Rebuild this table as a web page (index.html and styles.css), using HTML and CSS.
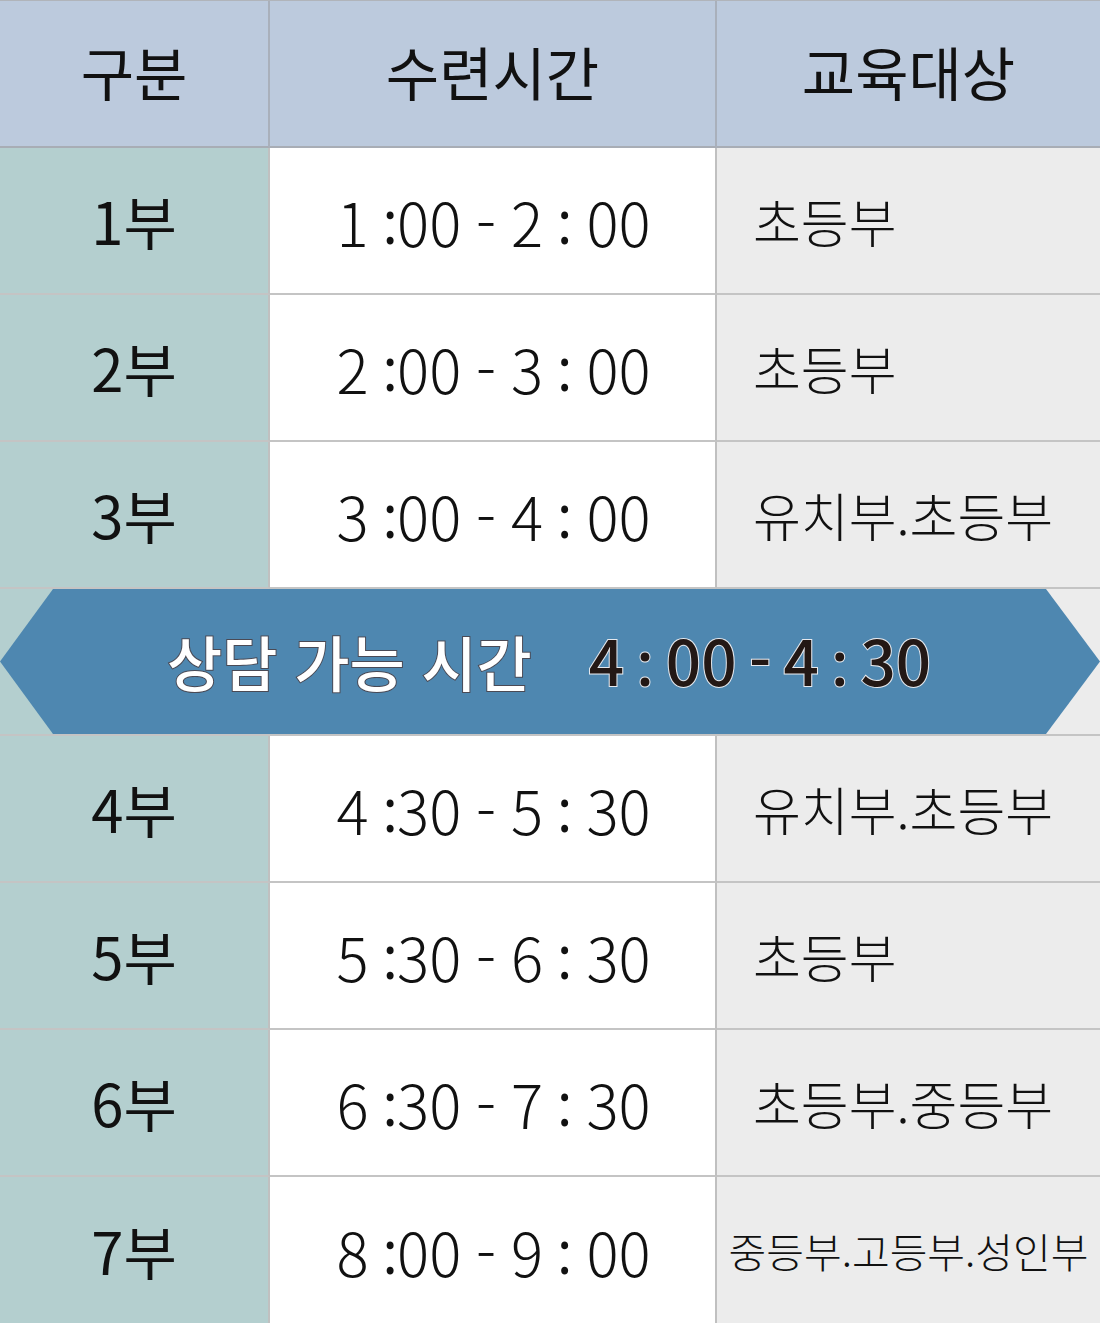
FILE: index.html
```html
<!DOCTYPE html>
<html lang="ko">
<head>
<meta charset="utf-8">
<title>수련시간표</title>
<link rel="stylesheet" href="styles.css">
</head>
<body>
<div class="table">
  <div class="cell head c1">구분</div>
  <div class="cell head c2">수련시간</div>
  <div class="cell head c3">교육대상</div>

  <div class="cell part">1부</div>
  <div class="cell time">1 <span class="colon">:</span>00 - 2 <span class="colon">:</span> 00</div>
  <div class="cell target">초등부</div>

  <div class="cell part">2부</div>
  <div class="cell time">2 <span class="colon">:</span>00 - 3 <span class="colon">:</span> 00</div>
  <div class="cell target">초등부</div>

  <div class="cell part">3부</div>
  <div class="cell time">3 <span class="colon">:</span>00 - 4 <span class="colon">:</span> 00</div>
  <div class="cell target">유치부.초등부</div>

  <div class="banner-row">
    <div class="banner">
      <span class="banner-label">상담 가능 시간</span>
      <span class="banner-time">4 <span class="colon">:</span> 00 - 4 <span class="colon">:</span> 30</span>
    </div>
  </div>

  <div class="cell part">4부</div>
  <div class="cell time">4 <span class="colon">:</span>30 - 5 <span class="colon">:</span> 30</div>
  <div class="cell target">유치부.초등부</div>

  <div class="cell part">5부</div>
  <div class="cell time">5 <span class="colon">:</span>30 - 6 <span class="colon">:</span> 30</div>
  <div class="cell target">초등부</div>

  <div class="cell part">6부</div>
  <div class="cell time">6 <span class="colon">:</span>30 - 7 <span class="colon">:</span> 30</div>
  <div class="cell target">초등부.중등부</div>

  <div class="cell part last">7부</div>
  <div class="cell time last">8 <span class="colon">:</span>00 - 9 <span class="colon">:</span> 00</div>
  <div class="cell target small last">중등부.고등부.성인부</div>
</div>
</body>
</html>
```
FILE: styles.css
```css
* { box-sizing: border-box; }
html, body { margin: 0; padding: 0; background: #ececec; }
body {
  width: 1100px;
  height: 1323px;
  overflow: hidden;
  font-family: "Noto Sans CJK KR", "Noto Sans", sans-serif;
  color: #111;
}
.table {
  display: grid;
  grid-template-columns: 270px 447px 383px;
  grid-template-rows: repeat(9, 147px);
  border-top: 1px solid #b0b4ba;
}
.cell {
  display: flex;
  align-items: center;
  justify-content: center;
  border-bottom: 2px solid #c4c4c4;
  border-right: 2px solid #c0c0c0;
  white-space: pre;
  line-height: 1;
}
.cell.target { border-right: 0; }
.cell.last { border-bottom: 0; }
.head {
  background: #bccadd;
  font-size: 58px;
  font-weight: 400;
  padding-bottom: 6px;
  border-bottom-color: #a8adb5;
  border-right-color: #a9b0bb;
}
.head.c3 { border-right: 0; }
.part {
  background: #b4cfcf;
  font-size: 58px;
  font-weight: 400;
  padding-bottom: 2px;
}
.time {
  background: #ffffff;
  font-size: 60px;
  font-weight: 300;
  word-spacing: -2px;
  padding-left: 2px;
}
.colon {
  font-family: "Open Sans", "Liberation Sans", sans-serif;
  font-weight: 400;
}
.time .colon { margin: 0 -1px; }
.target {
  background: #ececec;
  justify-content: flex-start;
  padding-left: 36px;
  font-size: 52px;
  font-weight: 300;
}
.target.small {
  justify-content: center;
  padding-left: 0;
  font-size: 41px;
}
.banner-row {
  grid-column: 1 / -1;
  border-bottom: 2px solid #c4c4c4;
  background: linear-gradient(to right, #b4cfcf 0 268px, #c0c0c0 268px 270px, #fff 270px 715px, #c0c0c0 715px 717px, #ececec 717px);
  display: flex;
}
.banner {
  flex: 1;
  background: #4e87b0;
  clip-path: polygon(53px 0, calc(100% - 54px) 0, 100% 50%, calc(100% - 54px) 100%, 53px 100%, 0 50%);
  display: flex;
  align-items: center;
  padding-left: 167px;
  padding-bottom: 2px;
  gap: 57px;
  font-weight: 500;
  line-height: 1;
  white-space: pre;
}
.banner-label {
  color: #fff;
  font-size: 60px;
  -webkit-text-stroke: 2px #4a4a55;
  paint-order: stroke fill;
}
.banner-time {
  color: #231815;
  font-size: 62px;
  word-spacing: -5px;
  -webkit-text-stroke: 2px #e6e9ee;
  paint-order: stroke fill;
}
.banner-time .colon { font-weight: 600; }
```
